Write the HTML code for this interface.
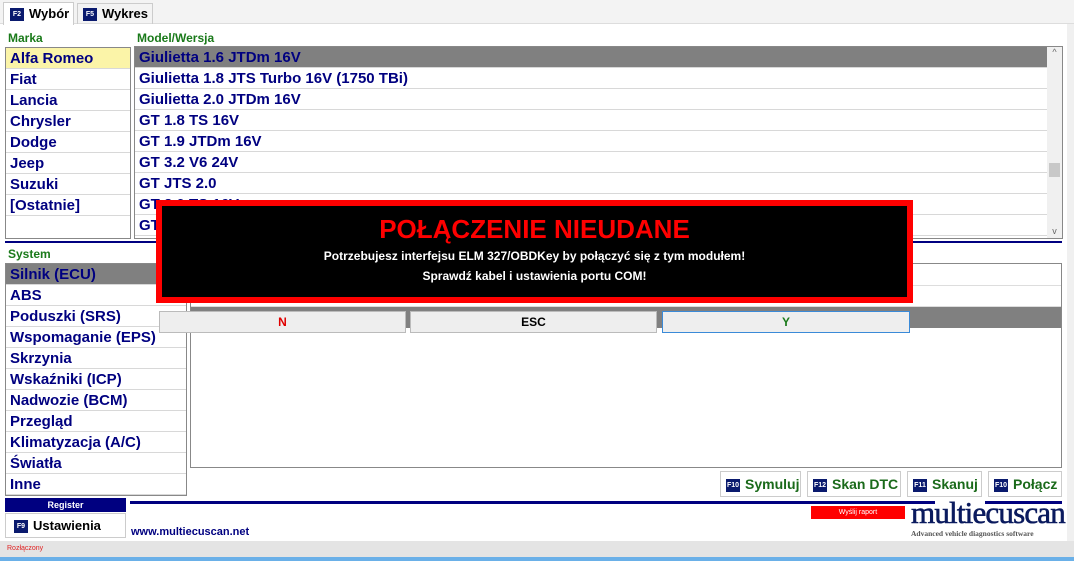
<!DOCTYPE html>
<html><head><meta charset="utf-8"><style>
*{margin:0;padding:0;box-sizing:border-box}
body{width:1074px;height:561px;background:#fff;font-family:"Liberation Sans",Arial,sans-serif;position:relative;overflow:hidden}
.a{position:absolute}
.lbl{color:#1a7a1a;font-weight:bold;font-size:12px}
.list{border:1px solid #888;background:#fff}
.row{height:21px;border-bottom:1px solid #d8d8d8;color:#000080;font-weight:bold;font-size:15px;line-height:21px;padding-left:4px;white-space:nowrap;overflow:hidden}
.key{display:inline-block;background:#0a1a6e;color:#fff;font-size:7px;font-weight:bold;width:14px;height:13px;line-height:13px;text-align:center;vertical-align:middle;margin-right:5px}
.btn{border:1px solid #ccc;background:#fff;color:#1a6a1a;font-weight:bold;font-size:14px;line-height:24px;padding-left:5px;white-space:nowrap;overflow:hidden}
.db{background:#eeeeee;border:1px solid #bbb;font-weight:bold;font-size:12px;text-align:center;line-height:20px}
</style></head><body>
<div class="a" style="left:0;top:0;width:1074px;height:24px;background:#f3f3f3;border-bottom:1px solid #ddd"></div>
<div class="a" style="left:3px;top:2px;width:71px;height:23px;background:#fff;border:1px solid #ccc;border-bottom:none;font-weight:bold;font-size:13px;line-height:22px;padding-left:6px"><span class="key">F2</span>Wybór</div>
<div class="a" style="left:77px;top:3px;width:76px;height:21px;border:1px solid #ccc;border-bottom:none;font-weight:bold;font-size:13px;line-height:20px;padding-left:5px"><span class="key">F5</span>Wykres</div>
<div class="a" style="left:1067px;top:24px;width:7px;height:517px;background:#f0f0f0"></div>
<div class="a lbl" style="left:8px;top:31px">Marka</div>
<div class="a lbl" style="left:137px;top:31px">Model/Wersja</div>
<div class="a list" style="left:5px;top:47px;width:126px;height:192px">
<div class="row" style="background:#fbf4a8">Alfa Romeo</div><div class="row">Fiat</div><div class="row">Lancia</div><div class="row">Chrysler</div><div class="row">Dodge</div><div class="row">Jeep</div><div class="row">Suzuki</div><div class="row">[Ostatnie]</div></div>
<div class="a list" style="left:134px;top:46px;width:929px;height:193px">
<div class="row" style="background:#808080;width:912px">Giulietta 1.6 JTDm 16V</div><div class="row" style="width:912px">Giulietta 1.8 JTS Turbo 16V (1750 TBi)</div><div class="row" style="width:912px">Giulietta 2.0 JTDm 16V</div><div class="row" style="width:912px">GT 1.8 TS 16V</div><div class="row" style="width:912px">GT 1.9 JTDm 16V</div><div class="row" style="width:912px">GT 3.2 V6 24V</div><div class="row" style="width:912px">GT JTS 2.0</div><div class="row" style="width:912px">GT 2.0 TS 16V</div><div class="row" style="width:912px">GT</div>
<div class="a" style="right:0;top:0;width:15px;height:191px;background:#f0f0f0;font-size:9px;color:#666;text-align:center">^<div class="a" style="left:2px;top:116px;width:11px;height:14px;background:#c8c8c8"></div><div class="a" style="left:0;bottom:2px;width:15px">v</div></div></div>
<div class="a" style="left:5px;top:241px;width:1057px;height:2px;background:#000080"></div>
<div class="a lbl" style="left:8px;top:247px">System</div>
<div class="a list" style="left:5px;top:263px;width:182px;height:233px">
<div class="row" style="background:#808080">Silnik (ECU)</div><div class="row">ABS</div><div class="row">Poduszki (SRS)</div><div class="row">Wspomaganie (EPS)</div><div class="row">Skrzynia</div><div class="row">Wskaźniki (ICP)</div><div class="row">Nadwozie (BCM)</div><div class="row">Przegląd</div><div class="row">Klimatyzacja (A/C)</div><div class="row">Światła</div><div class="row">Inne</div></div>
<div class="a list" style="left:190px;top:263px;width:872px;height:205px">
<div style="height:22px;border-bottom:1px solid #ddd"></div><div style="height:21px;border-bottom:1px solid #ddd"></div><div style="height:21px;background:#808080"></div></div>
<div class="a" style="left:156px;top:200px;width:757px;height:103px;background:#000;border:6px solid #f00;text-align:center;color:#fff;font-weight:bold">
<div style="color:#f00;font-size:26px;margin-top:8px;line-height:30px">POŁĄCZENIE NIEUDANE</div>
<div style="font-size:12px;margin-top:5px">Potrzebujesz interfejsu ELM 327/OBDKey by połączyć się z tym modułem!</div>
<div style="font-size:12px;margin-top:6px">Sprawdź kabel i ustawienia portu COM!</div></div>
<div class="a db" style="left:159px;top:311px;width:247px;height:22px;color:#e00000">N</div>
<div class="a db" style="left:410px;top:311px;width:247px;height:22px">ESC</div>
<div class="a db" style="left:662px;top:311px;width:248px;height:22px;color:#1a7a1a;border-color:#3a8ad8">Y</div>
<div class="a btn" style="left:720px;top:471px;width:81px;height:26px"><span class="key">F10</span>Symuluj</div>
<div class="a btn" style="left:807px;top:471px;width:94px;height:26px"><span class="key">F12</span>Skan DTC</div>
<div class="a btn" style="left:907px;top:471px;width:75px;height:26px"><span class="key">F11</span>Skanuj</div>
<div class="a btn" style="left:988px;top:471px;width:74px;height:26px"><span class="key">F10</span>Połącz</div>
<div class="a" style="left:5px;top:498px;width:121px;height:14px;background:#000080;color:#fff;font-size:9px;font-weight:bold;text-align:center;line-height:14px">Register</div>
<div class="a" style="left:5px;top:513px;width:121px;height:25px;border:1px solid #ccc;font-weight:bold;font-size:13px;line-height:23px;padding-left:8px"><span class="key">F9</span>Ustawienia</div>
<div class="a" style="left:130px;top:501px;width:805px;height:3px;background:#000080"></div>
<div class="a" style="left:985px;top:501px;width:77px;height:3px;background:#000080"></div>
<div class="a" style="left:131px;top:526px;color:#000080;font-weight:bold;font-size:11px">www.multiecuscan.net</div>
<div class="a" style="left:811px;top:506px;width:94px;height:13px;background:#f00;color:#fff;font-size:7px;text-align:center;line-height:13px">Wyślij raport</div>
<div class="a" style="left:911px;top:497px;width:152px;color:#0a1a5e;font-family:'Liberation Serif',serif;font-size:31px;line-height:32px;letter-spacing:-0.8px;white-space:nowrap;-webkit-text-stroke:0.6px #0a1a5e">multiecuscan</div>
<div class="a" style="left:911px;top:529px;width:150px;color:#555;font-size:7.5px;font-weight:bold;font-family:'Liberation Serif',serif;white-space:nowrap">Advanced vehicle diagnostics software</div>
<div class="a" style="left:0;top:541px;width:1074px;height:16px;background:#e4e4e4;color:#e02020;font-size:7px;line-height:16px;padding-left:7px">Rozłączony</div>
<div class="a" style="left:0;top:557px;width:1074px;height:4px;background:#6ab0e8"></div>
</body></html>
